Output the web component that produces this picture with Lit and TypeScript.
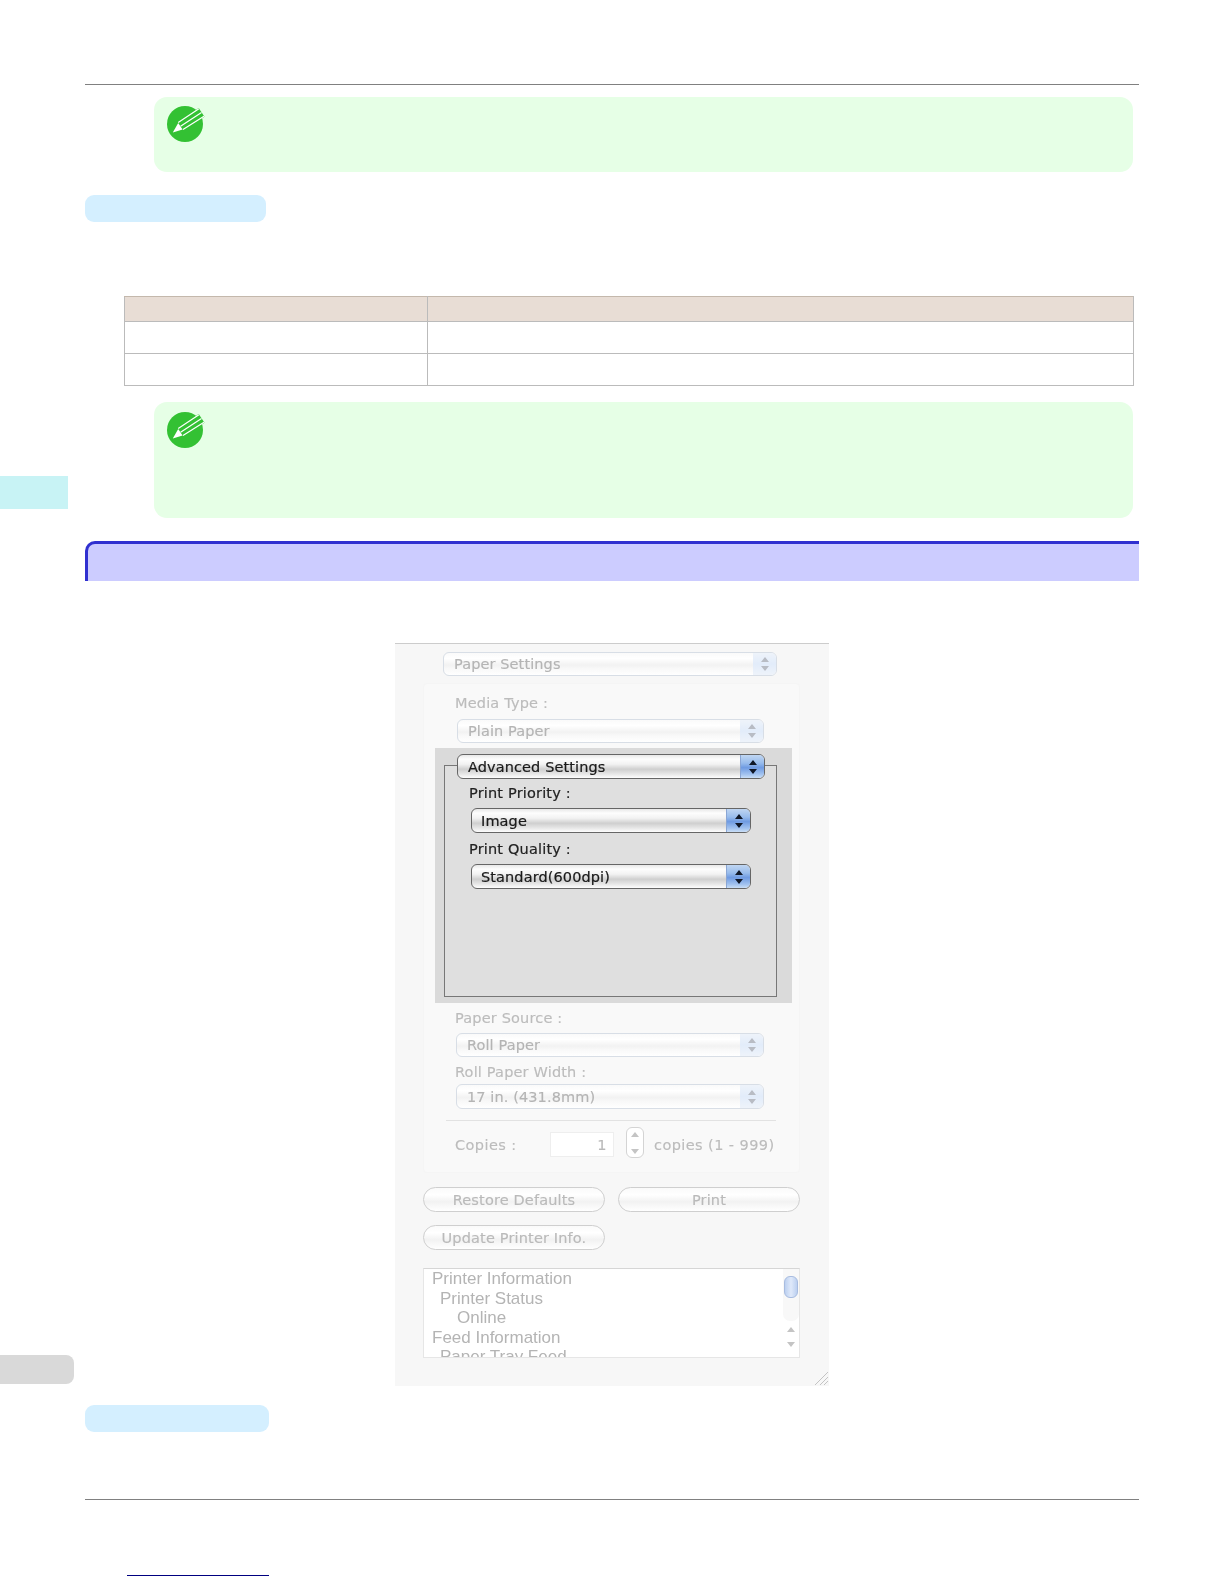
import { LitElement, html, css } from "lit";
import { customElement } from "lit/decorators.js";

const arrows = (color: string) => html`<svg class="arrows" viewBox="0 0 10 16" width="10" height="16">
  <path d="M5 1 L9 6 L1 6 Z M5 15 L9 10 L1 10 Z" fill=${color}></path></svg>`;

const popup = (text: string, cls: string, active = false) => html`<div class="popup ${active ? "on" : "off"} ${cls}">
  <span class="ptext">${text}</span>
  <span class="cap">${arrows(active ? "#101828" : "#b8bcc4")}</span>
</div>`;

const pencil = html`<svg class="pencil" viewBox="0 0 42 40" width="42" height="40">
  <circle cx="20" cy="20" r="18" fill="#33c133"></circle>
  <path d="M12.7 17.9 L33.7 4 L39.5 12.8 L18.3 26.3 Z" fill="#33c133"></path>
  <path d="M7.8 28.4 L13.2 19 L17.6 25.4 Z" fill="#fff"></path>
  <path d="M13.2 18.6 L33.9 4.8 M15.6 22.2 L36.5 8.6 M18 25.6 L39 12.2" stroke="#fff" stroke-width="1.2" fill="none"></path>
</svg>`;

@customElement("app-root")
export class AppRoot extends LitElement {
  static styles = css`
    :host { display: block; position: relative; width: 1224px; height: 1584px; background: #fff; overflow: hidden; font-family: "DejaVu Sans", sans-serif; }
    .page { margin-left: 85px; width: 1054px; padding-top: 84px; }
    .rule { height: 1px; background: #808080; }
    .note { margin-left: 69px; width: 979px; background: #e6ffe6; border-radius: 13px; padding: 7px 0 0 11px; box-sizing: border-box; }
    .note1 { margin-top: 12px; height: 75px; }
    .note2 { margin-top: 16px; height: 116px; }
    .note2 .pencil { margin-top: 1px; }
    .pencil { display: block; }
    .pill { background: #d4efff; border-radius: 9px; height: 27px; }
    .pill1 { margin-top: 23px; width: 181px; }
    .pill2 { margin-top: 19px; width: 184px; }
    table { border-collapse: collapse; table-layout: fixed; margin: 74px 0 0 39px; width: 1010px; height: 89px; }
    td, th { border: 1px solid #bbb; padding: 0; }
    th { background: #e8ddd5; height: 24px; border-top-color: #c4b8ac; }
    td { height: 31px; }
    .c1 { width: 302px; }
    .heading { margin-top: 23px; height: 40px; box-sizing: border-box; background: #ccccff; border-top: 3px solid #3030d0; border-left: 3px solid #3030d0; border-top-left-radius: 10px; }
    .tab1 { position: absolute; left: 0; top: 476px; width: 68px; height: 33px; background: #c8f3f5; }
    .tab2 { position: absolute; left: 0; top: 1355px; width: 74px; height: 29px; background: #d9d9d9; border-radius: 0 8px 8px 0; }

    .dialog { position: relative; margin: 62px 0 0 310px; width: 434px; height: 743px; box-sizing: border-box; border-top: 1px solid #ccc; background: #f7f7f7; padding-top: 8px; filter: blur(0.45px); }
    .panel { margin: 7px 0 0 28px; width: 377px; height: 490px; box-sizing: border-box; padding-top: 9px; background: #f9f9f9; border: 1px solid #f5f5f5; border-radius: 4px; }
    .grey { margin: 5px 0 0 11px; width: 357px; height: 255px; box-sizing: border-box; padding: 17px 0 0 9px; background: #dadada; }
    .box { width: 333px; height: 232px; box-sizing: border-box; border: 1px solid #777; background: #dfdfdf; }

    .lbl { height: 20px; line-height: 20px; font-size: 14.5px; white-space: nowrap; letter-spacing: 0.17px; }
    .lbl.off { color: #bcbcbc; -webkit-text-stroke: 0.15px #bcbcbc; }
    .lbl.on { color: #222; -webkit-text-stroke: 0.2px #222; }

    .popup { display: flex; box-sizing: border-box; align-items: stretch; border-radius: 6px; overflow: hidden; font-size: 14.5px; white-space: nowrap; letter-spacing: 0.1px; }
    .ptext { flex: 1; display: flex; align-items: center; padding-left: 10px; }
    .cap { width: 23px; display: flex; align-items: center; justify-content: center; }
    .arrows { display: block; }
    .popup.on { border: 1px solid #666; border-bottom-width: 1.5px; color: #1a1a1a; -webkit-text-stroke: 0.2px #1a1a1a; background: linear-gradient(#e8e8e8, #fdfdfd 18%, #f2f2f2 40%, #cfcfcf 62%, #e6e6e6 82%, #fdfdfd); }
    .popup.on .cap { background: linear-gradient(#c0d6f2, #98bcec 35%, #6f9be2 55%, #a4c4f0 85%, #cadef6); border-left: 1px solid #8aa6d4; }
    .popup.off { border: 1px solid #d8dee6; color: #b4b4b4; -webkit-text-stroke: 0.15px #b4b4b4; background: linear-gradient(#fafafa, #fff 25%, #f2f2f2 55%, #f8f8f8 70%, #fff); }
    .popup.off .cap { background: linear-gradient(#eef3fa, #e2ecfa 50%, #eef3fa); }

    .p-top { margin-left: 48px; width: 334px; height: 24px; }
    .p-media { margin: 6px 0 0 33px; width: 307px; height: 24px; }
    .p-adv { margin: -12px 0 0 12px; width: 308px; height: 25px; }
    .p-in { margin: 5px 0 0 26px; width: 280px; height: 25px; }
    .p-in .ptext { padding-left: 9px; }
    .p-roll { margin: 5px 0 0 32px; width: 308px; height: 24px; }
    .p-width { margin: 2px 0 0 32px; width: 308px; height: 25px; }

    .l-media { margin-left: 31px; }
    .l-prio { margin: 4px 0 0 24px; }
    .l-qual { margin: 6px 0 0 24px; }
    .l-src { margin: 5px 0 0 31px; }
    .l-wid { margin: 5px 0 0 31px; }

    .sep { margin: 11px 0 0 22px; width: 330px; height: 1px; background: #e2e2e2; }
    .copies { margin: 6px 0 0 31px; height: 31px; display: flex; align-items: center; font-size: 14.5px; letter-spacing: 0.42px; color: #bcbcbc; -webkit-text-stroke: 0.15px #bcbcbc; white-space: nowrap; }
    .copies .name { width: 95px; margin-top: 4px; }
    .num { width: 64px; height: 25px; margin-top: 4px; box-sizing: border-box; background: #fff; border: 1px solid #eeeeee; text-align: right; padding-right: 6px; line-height: 25px; font-size: 14.5px; color: #b8b8b8; }
    .stepper { margin-left: 12px; width: 18px; height: 31px; box-sizing: border-box; border: 1px solid #d4d4d4; border-radius: 6px; background: #fff; display: flex; align-items: center; justify-content: center; }
    .stepper svg { display: block; }
    .unit { margin-left: 10px; margin-top: 4px; }

    .btnrow { display: flex; gap: 13px; margin-left: 28px; }
    .r1 { margin-top: 14px; }
    .r2 { margin-top: 13px; }
    .btn { width: 182px; height: 25px; box-sizing: border-box; border: 1px solid #cfcfcf; border-radius: 13px; background: linear-gradient(#fafafa, #fff 30%, #f2f2f2 60%, #fff); display: flex; align-items: center; justify-content: center; font-size: 14.5px; letter-spacing: 0.15px; color: #bababa; -webkit-text-stroke: 0.15px #bababa; white-space: nowrap; }

    .list { margin: 18px 0 0 28px; width: 377px; height: 90px; box-sizing: border-box; display: flex; border: 1px solid #e6e6e6; border-top-color: #d6d6d6; background: #fff; overflow: hidden; }
    .items { flex: 1; font-family: "Liberation Sans", Arial, sans-serif; font-size: 17px; line-height: 19.5px; color: #b4b4b4; white-space: nowrap; padding-left: 8px; }
    .i1 { padding-left: 8px; }
    .i2 { padding-left: 25px; }
    .scroll { width: 16px; display: flex; flex-direction: column; align-items: center; background: #fff; }
    .track { height: 52px; width: 16px; box-sizing: border-box; padding: 7px 1px 0; background: #f8f8f8; border-radius: 0 0 7px 7px; }
    .thumb { width: 14px; height: 22px; box-sizing: border-box; border-radius: 6px; border: 1px solid #a8bce0; background: linear-gradient(90deg, #bcd0f0, #dfe9fa 50%, #bcd0f0); }
    .scroll svg { display: block; margin-top: 5px; }
    .grip { position: absolute; right: 0; bottom: 0; display: block; }

    .foot { margin-top: 67px; }
    .link { margin: 75px 0 0 42px; width: 142px; height: 1px; background: #000080; }
  `;

  render() {
    return html`
      <div class="tab1"></div>
      <div class="tab2"></div>
      <div class="page">
        <div class="rule"></div>
        <div class="note note1">${pencil}</div>
        <div class="pill pill1"></div>
        <table>
          <tr><th class="c1"></th><th></th></tr>
          <tr><td></td><td></td></tr>
          <tr><td></td><td></td></tr>
        </table>
        <div class="note note2">${pencil}</div>
        <div class="heading"></div>

        <div class="dialog">
          ${popup("Paper Settings", "p-top")}
          <div class="panel">
            <div class="lbl off l-media">Media Type :</div>
            ${popup("Plain Paper", "p-media")}
            <div class="grey">
              <div class="box">
                ${popup("Advanced Settings", "p-adv", true)}
                <div class="lbl on l-prio">Print Priority :</div>
                ${popup("Image", "p-in", true)}
                <div class="lbl on l-qual">Print Quality :</div>
                ${popup("Standard(600dpi)", "p-in", true)}
              </div>
            </div>
            <div class="lbl off l-src">Paper Source :</div>
            ${popup("Roll Paper", "p-roll")}
            <div class="lbl off l-wid">Roll Paper Width :</div>
            ${popup("17 in. (431.8mm)", "p-width")}
            <div class="sep"></div>
            <div class="copies">
              <span class="name">Copies :</span>
              <span class="num">1</span>
              <span class="stepper">
                <svg width="10" height="24" viewBox="0 0 10 24"><path d="M5 1 L9 6 L1 6 Z M5 23 L9 18 L1 18 Z" fill="#c4c4c4"></path></svg>
              </span>
              <span class="unit">copies (1 - 999)</span>
            </div>
          </div>
          <div class="btnrow r1">
            <div class="btn">Restore Defaults</div>
            <div class="btn">Print</div>
          </div>
          <div class="btnrow r2">
            <div class="btn">Update Printer Info.</div>
          </div>
          <div class="list">
            <div class="items">
              <div>Printer Information</div>
              <div class="i1">Printer Status</div>
              <div class="i2">Online</div>
              <div>Feed Information</div>
              <div class="i1">Paper Tray Feed</div>
            </div>
            <div class="scroll">
              <div class="track"><div class="thumb"></div></div>
              <svg width="10" height="22" viewBox="0 0 10 22"><path d="M5 1 L9 6 L1 6 Z M5 21 L9 16 L1 16 Z" fill="#c4c4c4"></path></svg>
            </div>
          </div>
          <svg class="grip" width="16" height="16" viewBox="0 0 16 16">
            <path d="M2 15 L15 2 M7 15 L15 7 M11 15 L15 11" stroke="#c4c4c4" stroke-width="1" fill="none"></path>
          </svg>
        </div>

        <div class="pill pill2"></div>
        <div class="rule foot"></div>
        <div class="link"></div>
      </div>
    `;
  }
}
